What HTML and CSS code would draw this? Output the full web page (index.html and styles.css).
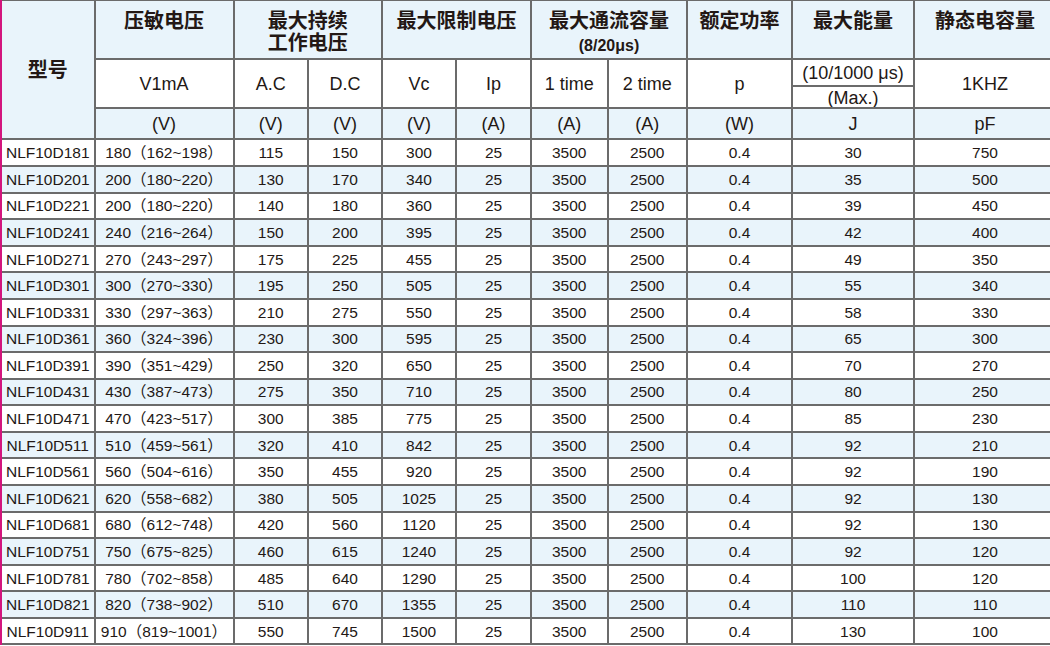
FILE: index.html
```html
<!DOCTYPE html>
<html lang="zh-CN">
<head>
<meta charset="utf-8">
<title>NLF10D 压敏电阻规格表</title>
<link rel="stylesheet" href="styles.css">
</head>
<body>
<div class="spec">
  <div class="c h1 model">型号</div>
  <div class="c h1">压敏电压</div>
  <div class="c h1 span2">最大持续<br>工作电压</div>
  <div class="c h1 span2">最大限制电压</div>
  <div class="c h1 span2">最大通流容量<span class="sub">(8/20μs)</span></div>
  <div class="c h1">额定功率</div>
  <div class="c h1">最大能量</div>
  <div class="c h1">静态电容量</div>

  <div class="c h2 rs2">V1mA</div>
  <div class="c h2 rs2">A.C</div>
  <div class="c h2 rs2">D.C</div>
  <div class="c h2 rs2">Vc</div>
  <div class="c h2 rs2">Ip</div>
  <div class="c h2 rs2">1 time</div>
  <div class="c h2 rs2">2 time</div>
  <div class="c h2 rs2">p</div>
  <div class="c h2 top">(10/1000 μs)</div>
  <div class="c h2 rs2">1KHZ</div>
  <div class="c h2 bottom">(Max.)</div>

  <div class="c h3">(V)</div>
  <div class="c h3">(V)</div>
  <div class="c h3">(V)</div>
  <div class="c h3">(V)</div>
  <div class="c h3">(A)</div>
  <div class="c h3">(A)</div>
  <div class="c h3">(A)</div>
  <div class="c h3">(W)</div>
  <div class="c h3">J</div>
  <div class="c h3">pF</div>

  <div class="row"><div class="c">NLF10D181</div><div class="c">180（162~198）</div><div class="c">115</div><div class="c">150</div><div class="c">300</div><div class="c">25</div><div class="c">3500</div><div class="c">2500</div><div class="c">0.4</div><div class="c">30</div><div class="c">750</div></div>
  <div class="row alt"><div class="c">NLF10D201</div><div class="c">200（180~220）</div><div class="c">130</div><div class="c">170</div><div class="c">340</div><div class="c">25</div><div class="c">3500</div><div class="c">2500</div><div class="c">0.4</div><div class="c">35</div><div class="c">500</div></div>
  <div class="row"><div class="c">NLF10D221</div><div class="c">200（180~220）</div><div class="c">140</div><div class="c">180</div><div class="c">360</div><div class="c">25</div><div class="c">3500</div><div class="c">2500</div><div class="c">0.4</div><div class="c">39</div><div class="c">450</div></div>
  <div class="row alt"><div class="c">NLF10D241</div><div class="c">240（216~264）</div><div class="c">150</div><div class="c">200</div><div class="c">395</div><div class="c">25</div><div class="c">3500</div><div class="c">2500</div><div class="c">0.4</div><div class="c">42</div><div class="c">400</div></div>
  <div class="row"><div class="c">NLF10D271</div><div class="c">270（243~297）</div><div class="c">175</div><div class="c">225</div><div class="c">455</div><div class="c">25</div><div class="c">3500</div><div class="c">2500</div><div class="c">0.4</div><div class="c">49</div><div class="c">350</div></div>
  <div class="row alt"><div class="c">NLF10D301</div><div class="c">300（270~330）</div><div class="c">195</div><div class="c">250</div><div class="c">505</div><div class="c">25</div><div class="c">3500</div><div class="c">2500</div><div class="c">0.4</div><div class="c">55</div><div class="c">340</div></div>
  <div class="row"><div class="c">NLF10D331</div><div class="c">330（297~363）</div><div class="c">210</div><div class="c">275</div><div class="c">550</div><div class="c">25</div><div class="c">3500</div><div class="c">2500</div><div class="c">0.4</div><div class="c">58</div><div class="c">330</div></div>
  <div class="row alt"><div class="c">NLF10D361</div><div class="c">360（324~396）</div><div class="c">230</div><div class="c">300</div><div class="c">595</div><div class="c">25</div><div class="c">3500</div><div class="c">2500</div><div class="c">0.4</div><div class="c">65</div><div class="c">300</div></div>
  <div class="row"><div class="c">NLF10D391</div><div class="c">390（351~429）</div><div class="c">250</div><div class="c">320</div><div class="c">650</div><div class="c">25</div><div class="c">3500</div><div class="c">2500</div><div class="c">0.4</div><div class="c">70</div><div class="c">270</div></div>
  <div class="row alt"><div class="c">NLF10D431</div><div class="c">430（387~473）</div><div class="c">275</div><div class="c">350</div><div class="c">710</div><div class="c">25</div><div class="c">3500</div><div class="c">2500</div><div class="c">0.4</div><div class="c">80</div><div class="c">250</div></div>
  <div class="row"><div class="c">NLF10D471</div><div class="c">470（423~517）</div><div class="c">300</div><div class="c">385</div><div class="c">775</div><div class="c">25</div><div class="c">3500</div><div class="c">2500</div><div class="c">0.4</div><div class="c">85</div><div class="c">230</div></div>
  <div class="row alt"><div class="c">NLF10D511</div><div class="c">510（459~561）</div><div class="c">320</div><div class="c">410</div><div class="c">842</div><div class="c">25</div><div class="c">3500</div><div class="c">2500</div><div class="c">0.4</div><div class="c">92</div><div class="c">210</div></div>
  <div class="row"><div class="c">NLF10D561</div><div class="c">560（504~616）</div><div class="c">350</div><div class="c">455</div><div class="c">920</div><div class="c">25</div><div class="c">3500</div><div class="c">2500</div><div class="c">0.4</div><div class="c">92</div><div class="c">190</div></div>
  <div class="row alt"><div class="c">NLF10D621</div><div class="c">620（558~682）</div><div class="c">380</div><div class="c">505</div><div class="c">1025</div><div class="c">25</div><div class="c">3500</div><div class="c">2500</div><div class="c">0.4</div><div class="c">92</div><div class="c">130</div></div>
  <div class="row"><div class="c">NLF10D681</div><div class="c">680（612~748）</div><div class="c">420</div><div class="c">560</div><div class="c">1120</div><div class="c">25</div><div class="c">3500</div><div class="c">2500</div><div class="c">0.4</div><div class="c">92</div><div class="c">130</div></div>
  <div class="row alt"><div class="c">NLF10D751</div><div class="c">750（675~825）</div><div class="c">460</div><div class="c">615</div><div class="c">1240</div><div class="c">25</div><div class="c">3500</div><div class="c">2500</div><div class="c">0.4</div><div class="c">92</div><div class="c">120</div></div>
  <div class="row"><div class="c">NLF10D781</div><div class="c">780（702~858）</div><div class="c">485</div><div class="c">640</div><div class="c">1290</div><div class="c">25</div><div class="c">3500</div><div class="c">2500</div><div class="c">0.4</div><div class="c">100</div><div class="c">120</div></div>
  <div class="row alt"><div class="c">NLF10D821</div><div class="c">820（738~902）</div><div class="c">510</div><div class="c">670</div><div class="c">1355</div><div class="c">25</div><div class="c">3500</div><div class="c">2500</div><div class="c">0.4</div><div class="c">110</div><div class="c">110</div></div>
  <div class="row"><div class="c">NLF10D911</div><div class="c">910（819~1001）</div><div class="c">550</div><div class="c">745</div><div class="c">1500</div><div class="c">25</div><div class="c">3500</div><div class="c">2500</div><div class="c">0.4</div><div class="c">130</div><div class="c">100</div></div>
</div>
</body>
</html>
```

FILE: styles.css
```css
html, body {
  margin: 0;
  padding: 0;
  background: #ffffff;
  overflow: hidden;
}

.spec {
  display: grid;
  width: max-content;
  grid-template-columns: 91.5px 137px 72.5px 72px 72px 73px 74.5px 77.5px 103px 120px 140px;
  grid-template-rows: 57px 24.5px 20.2px 29.8px repeat(19, 24.58px);
  gap: 2px;
  padding: 1px 0 2px 0;
  background: #6b6b6b;
  border-left: 2px solid #d3157d;
  font-family: "Liberation Sans", "Noto Sans CJK SC", sans-serif;
  color: #231815;
}

.c {
  display: flex;
  align-items: center;
  justify-content: center;
  text-align: center;
  background: #ffffff;
  font-size: 15.5px;
  line-height: 18px;
  white-space: nowrap;
  padding-top: 1px;
  box-sizing: border-box;
}

.row {
  display: contents;
}

.row.alt > .c {
  background: #e9f4fb;
}

.h1 {
  background: #e9f4fb;
  flex-direction: column;
  justify-content: flex-start;
  align-items: center;
  padding-top: 9px;
  font-size: 20px;
  line-height: 22px;
  font-weight: bold;
}

.h1 .sub {
  display: block;
  margin-top: 4px;
  font-size: 16px;
  line-height: 20px;
}

.model {
  grid-row: span 4;
  justify-content: center;
  padding-top: 0;
}

.span2 {
  grid-column: span 2;
}

.rs2 {
  grid-row: span 2;
}

.h2 {
  font-size: 18px;
  line-height: 20px;
  padding-top: 2px;
}

.h2.top {
  padding-top: 1px;
}

.h2.bottom {
  padding-top: 3px;
  overflow: hidden;
}

.h3 {
  background: #e9f4fb;
  font-size: 18px;
  line-height: 20px;
  padding-top: 1px;
}
```
